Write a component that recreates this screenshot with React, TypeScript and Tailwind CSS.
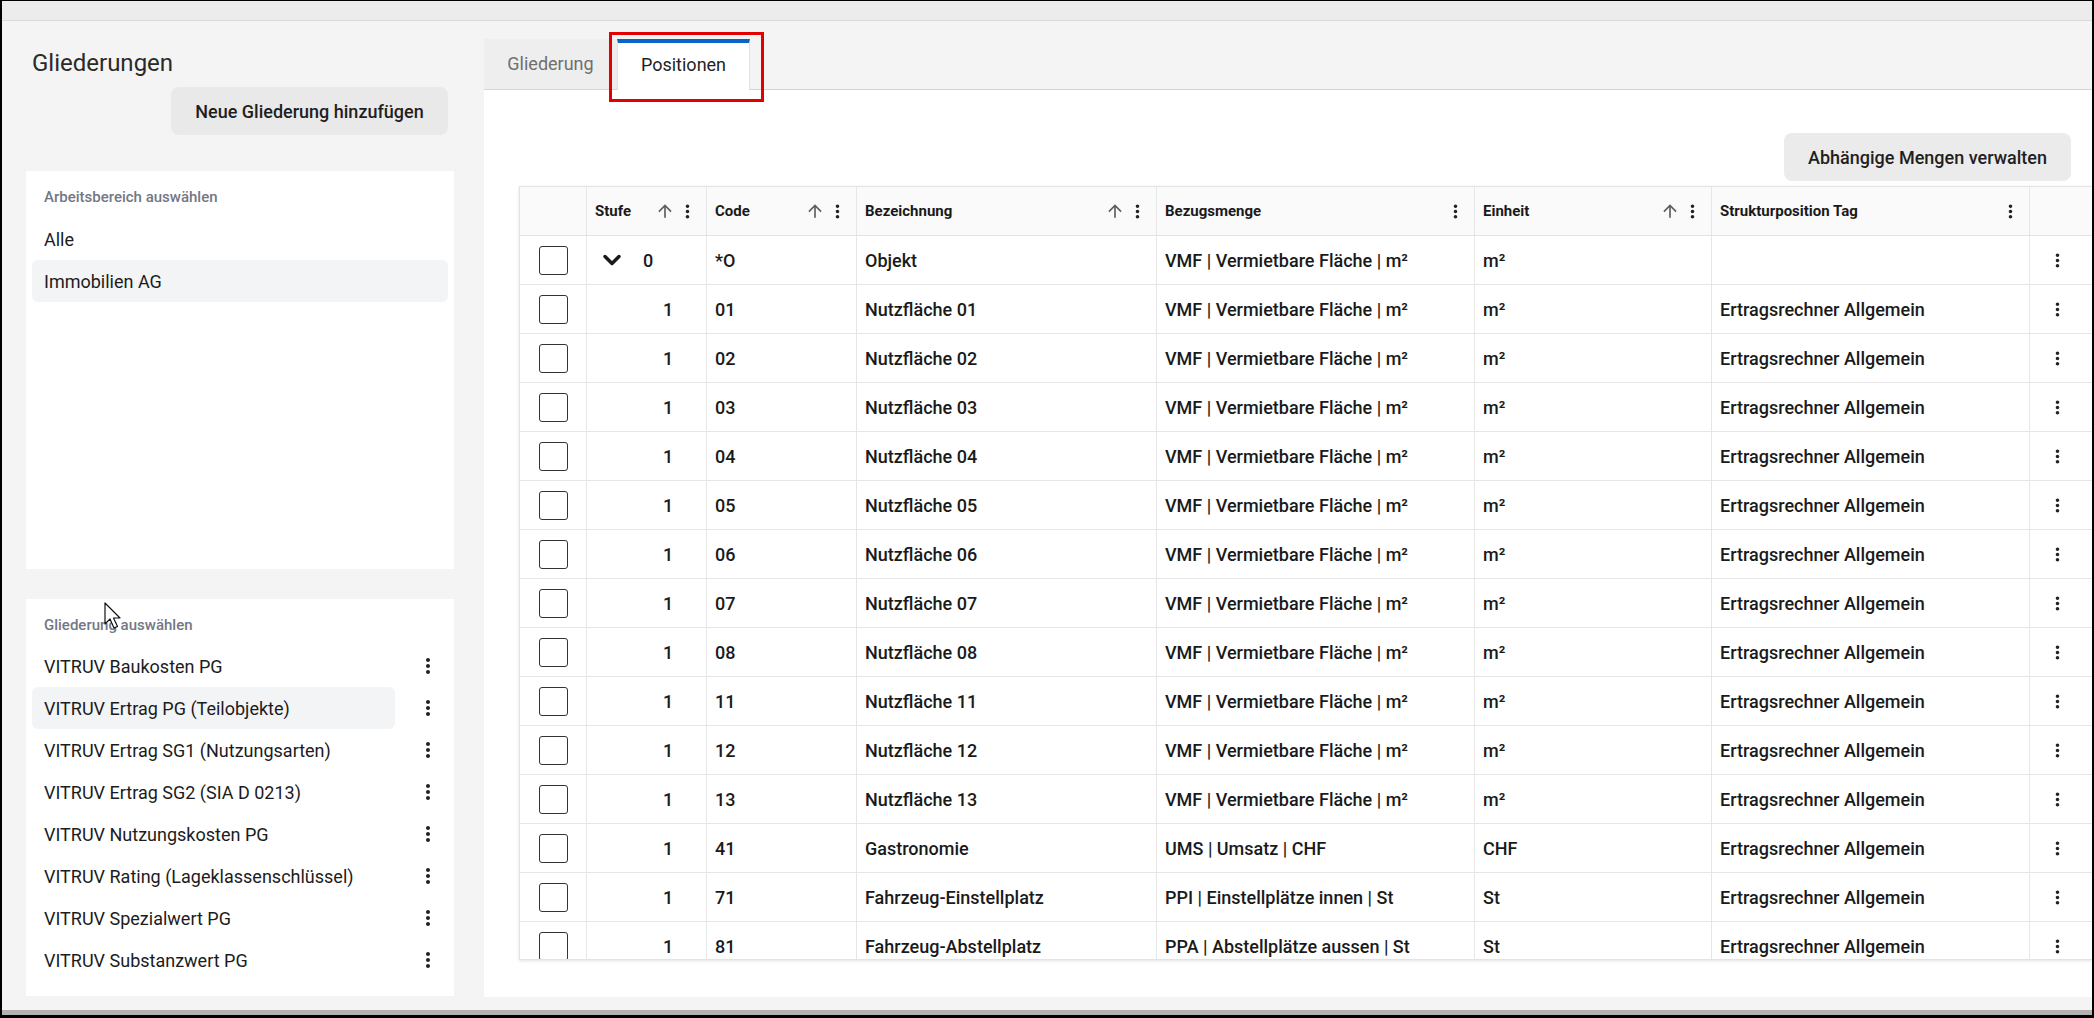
import { ChevronDown } from 'lucide-react'

const workspaces = [
  { label: 'Alle' },
  { label: 'Immobilien AG', active: true },
]

const outlines = [
  { label: 'VITRUV Baukosten PG' },
  { label: 'VITRUV Ertrag PG (Teilobjekte)', active: true },
  { label: 'VITRUV Ertrag SG1 (Nutzungsarten)' },
  { label: 'VITRUV Ertrag SG2 (SIA D 0213)' },
  { label: 'VITRUV Nutzungskosten PG' },
  { label: 'VITRUV Rating (Lageklassenschlüssel)' },
  { label: 'VITRUV Spezialwert PG' },
  { label: 'VITRUV Substanzwert PG' },
]

const columns = [
  { label: '', sort: false, menu: false },
  { label: 'Stufe', sort: true, menu: true },
  { label: 'Code', sort: true, menu: true },
  { label: 'Bezeichnung', sort: true, menu: true },
  { label: 'Bezugsmenge', sort: false, menu: true },
  { label: 'Einheit', sort: true, menu: true },
  { label: 'Strukturposition Tag', sort: false, menu: true },
  { label: '', sort: false, menu: false },
]

const VMF = 'VMF | Vermietbare Fläche | m²'
const TAG = 'Ertragsrechner Allgemein'

const rows = [
  { level: 0, code: '*O', name: 'Objekt', ref: VMF, unit: 'm²', tag: '' },
  ...['01', '02', '03', '04', '05', '06', '07', '08', '11', '12', '13'].map((c) => ({
    level: 1, code: c, name: `Nutzfläche ${c}`, ref: VMF, unit: 'm²', tag: TAG,
  })),
  { level: 1, code: '41', name: 'Gastronomie', ref: 'UMS | Umsatz | CHF', unit: 'CHF', tag: TAG },
  { level: 1, code: '71', name: 'Fahrzeug-Einstellplatz', ref: 'PPI | Einstellplätze innen | St', unit: 'St', tag: TAG },
  { level: 1, code: '81', name: 'Fahrzeug-Abstellplatz', ref: 'PPA | Abstellplätze aussen | St', unit: 'St', tag: TAG },
]

const grid = 'grid grid-cols-[67px_120px_150px_300px_318px_237px_318px_63px]'

function MoreVert({ size = 24, className = '' }: { size?: number; className?: string }) {
  return (
    <svg width={size} height={size} viewBox="0 0 24 24" className={className} fill="currentColor">
      <path d="M12 8c1.1 0 2-.9 2-2s-.9-2-2-2-2 .9-2 2 .9 2 2 2zm0 2c-1.1 0-2 .9-2 2s.9 2 2 2 2-.9 2-2-.9-2-2-2zm0 6c-1.1 0-2 .9-2 2s.9 2 2 2 2-.9 2-2-.9-2-2-2z" />
    </svg>
  )
}

function ArrowUp() {
  return (
    <svg width={20} height={20} viewBox="0 0 24 24" fill="currentColor" className="text-[#5f5f5f]">
      <path d="M4 12l1.41 1.41L11 7.83V20h2V7.83l5.58 5.59L20 12l-8-8-8 8z" />
    </svg>
  )
}

function Card({ label, className = '', children }: { label: string; className?: string; children: React.ReactNode }) {
  return (
    <div className={`ml-6 w-[428px] bg-white px-[6px] pt-4 ${className}`}>
      <p className="px-3 text-[15px] leading-[20px] font-medium text-[#737785]">{label}</p>
      {children}
    </div>
  )
}

export default function App() {
  return (
    <div className="relative w-[2094px] h-[1018px] flex flex-col overflow-hidden border-l-2 border-t border-r-2 border-b-[3px] border-black font-['Roboto',sans-serif] text-[#1c1c1c]">

      {/* top strip */}
      <div className="h-[20px] shrink-0 bg-[#ececec] border-b border-[#dadada]" />

      <div className="flex-1 flex min-h-0">

        {/* Sidebar */}
        <aside className="w-[482px] shrink-0 bg-[#f4f4f4] flex flex-col">
          <h1 className="ml-[30px] mt-[28px] text-[24px] leading-[28px] text-[#2a2a2a]">Gliederungen</h1>
          <button className="self-end mr-[36px] mt-[10px] w-[277px] h-[48px] rounded-lg bg-[#e9e9e9] text-[18px] font-medium text-[#1f1f1f]">
            Neue Gliederung hinzufügen
          </button>

          <Card label="Arbeitsbereich auswählen" className="mt-[36px] h-[398px]">
            <div className="mt-[11px]">
              {workspaces.map((w) => (
                <div
                  key={w.label}
                  className={`h-[42px] px-3 flex items-center rounded-md text-[18px] ${w.active ? 'bg-[#f3f4f6]' : ''}`}
                >
                  {w.label}
                </div>
              ))}
            </div>
          </Card>

          <Card label="Gliederung auswählen" className="mt-[30px] h-[397px]">
            <div className="mt-[10px]">
              {outlines.map((o) => (
                <div key={o.label} className="h-[42px] flex items-center">
                  <div className={`w-[363px] h-full px-3 flex items-center rounded-md text-[18px] whitespace-nowrap ${o.active ? 'bg-[#f3f4f6]' : ''}`}>
                    {o.label}
                  </div>
                  <div className="ml-[13px] w-[40px] flex justify-center text-[#222]">
                    <MoreVert size={24} />
                  </div>
                </div>
              ))}
            </div>
          </Card>
        </aside>

        {/* Content */}
        <main className="flex-1 min-w-0 bg-[#f4f4f4] flex flex-col">
          <div className="pt-[18px] flex items-end border-b border-[#d4d4d4] shrink-0">
            <div className="w-[133px] h-[50px] pb-[2px] bg-[#eeeeee] flex items-center justify-center text-[18px] text-[#6f6f6f]">
              Gliederung
            </div>
            <div className="w-[133px] h-[51px] -mb-px pb-[5px] bg-white border-t-4 border-t-[#0b63c5] border-x border-x-[#e2e2e2] flex items-center justify-center text-[18px] text-[#1f1f1f]">
              Positionen
            </div>
          </div>

          <div className="flex-1 bg-white flex flex-col min-h-0">
            <button className="self-end mr-[21px] mt-[43px] w-[287px] h-[48px] rounded-lg bg-[#ebebeb] text-[18px] font-medium text-[#1f1f1f] shrink-0">
              Abhängige Mengen verwalten
            </button>

            <div className="ml-[35px] mt-[5px] h-[774px] overflow-hidden border-l border-t border-b border-[#e3e3e3] shadow-[0_1px_3px_rgba(0,0,0,0.12)]">
              <div className={`${grid} h-[49px] bg-[#fafafa] border-b border-[#e3e3e3]`}>
                {columns.map((c, i) => (
                  <div key={i} className={`flex items-center px-2 ${i < columns.length - 1 ? 'border-r border-[#e6e6e6]' : ''}`}>
                    <span className="text-[15px] font-bold text-[#1a1a1a] whitespace-nowrap">{c.label}</span>
                    <span className="ml-auto flex items-center gap-[2px]">
                      {c.sort && <ArrowUp />}
                      {c.menu && <MoreVert size={21} className="text-[#222]" />}
                    </span>
                  </div>
                ))}
              </div>

              {rows.map((r) => (
                <div key={r.code} className={`${grid} h-[49px] border-b border-[#e6e6e6] text-[18px] font-medium text-[#1a1a1a]`}>
                  <div className="flex items-center justify-center border-r border-[#e6e6e6]">
                    <div className="w-[29px] h-[29px] rounded-[3px] border-[1.5px] border-[#333]" />
                  </div>
                  {r.level === 0 ? (
                    <div className="flex items-center pl-[11px] border-r border-[#e6e6e6]">
                      <ChevronDown size={28} strokeWidth={3} />
                      <span className="ml-[17px]">0</span>
                    </div>
                  ) : (
                    <div className="flex items-center pl-[76px] border-r border-[#e6e6e6]">{r.level}</div>
                  )}
                  <div className="flex items-center px-2 border-r border-[#e6e6e6]">{r.code}</div>
                  <div className="flex items-center px-2 border-r border-[#e6e6e6] whitespace-nowrap">{r.name}</div>
                  <div className="flex items-center px-2 border-r border-[#e6e6e6] whitespace-nowrap">{r.ref}</div>
                  <div className="flex items-center px-2 border-r border-[#e6e6e6]">{r.unit}</div>
                  <div className="flex items-center px-2 border-r border-[#e6e6e6] whitespace-nowrap">{r.tag}</div>
                  <div className="flex items-center justify-center pr-2 text-[#222]">
                    <MoreVert size={21} />
                  </div>
                </div>
              ))}
            </div>
          </div>
          <div className="h-[13px] shrink-0" />
        </main>
      </div>

      {/* bottom bar */}
      <div className="h-[5px] shrink-0 bg-[#b3b3b3]" />

      {/* annotation frame around the active tab */}
      <div className="absolute left-[607px] top-[31px] w-[155px] h-[70px] border-[3px] border-[#e30000]" />

      {/* mouse pointer */}
      <svg className="absolute left-[102px] top-[601px]" width="20" height="28" viewBox="0 0 20 28">
        <path d="M1 1 L1 22 L6 17 L10 26 L13.5 24.5 L9.5 16 L16 16 Z" fill="white" stroke="#111" strokeWidth="1.2" strokeLinejoin="round" />
      </svg>
    </div>
  )
}
